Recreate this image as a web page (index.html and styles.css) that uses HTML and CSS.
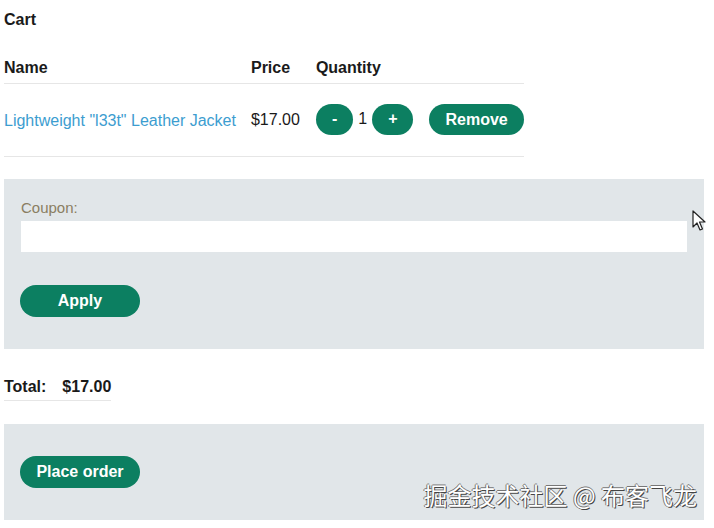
FILE: index.html
```html
<!DOCTYPE html>
<html>
<head>
    <title>Cart</title>
    <link rel="stylesheet" href="styles.css">
</head>
<body>
    <div class="page">
        <h3 class="cart-title">Cart</h3>

        <table class="cart-table">
            <thead>
                <tr>
                    <th>Name</th>
                    <th>Price</th>
                    <th>Quantity</th>
                    <th></th>
                </tr>
            </thead>
            <tbody>
                <tr>
                    <td><a class="product-link" href="#">Lightweight "l33t" Leather Jacket</a></td>
                    <td>$17.00</td>
                    <td>
                        <div class="qty">
                            <button class="btn">-</button>
                            <span>1</span>
                            <button class="btn">+</button>
                        </div>
                    </td>
                    <td><button class="btn">Remove</button></td>
                </tr>
            </tbody>
        </table>

        <div class="panel coupon-panel">
            <label class="coupon-label" for="coupon">Coupon:</label>
            <input class="coupon-input" id="coupon" type="text">
            <button class="btn btn-wide">Apply</button>
        </div>

        <table class="total-table">
            <tr>
                <th>Total:</th>
                <th>$17.00</th>
            </tr>
        </table>

        <div class="panel order-panel">
            <button class="btn btn-wide">Place order</button>
        </div>

        <!-- cursor captured in the screenshot -->
        <svg class="cursor" width="14" height="22" viewBox="0 0 14 22">
            <path d="M1 1 L1 17 L5 13 L8 20 L10.5 19 L7.5 12 L13 12 Z" fill="#fff" stroke="#222" stroke-width="1.2" stroke-linejoin="round"/>
        </svg>

        <div class="watermark">掘金技术社区 @ 布客飞龙</div>
    </div>
</body>
</html>
```

FILE: styles.css
```css
body {
    margin: 0;
    padding: 0 4px;
    font-family: "Liberation Sans", Arial, sans-serif;
    font-size: 16px;
    color: #1a1a1a;
    background-color: #fff;
}

.page {
    position: relative;
    width: 700px;
    height: 528px;
}

.cart-title {
    margin: 0;
    padding-top: 8px;
    font-size: 16px;
    line-height: 24px;
}

/* cart table */
.cart-table {
    margin-top: 24px;
    border-collapse: collapse;
}

.cart-table th {
    text-align: left;
    line-height: 24px;
    padding: 0 16px 3px 0;
    border-bottom: 1px solid #e6e6e6;
}

.cart-table td {
    height: 72px;
    padding: 0 16px 0 0;
    vertical-align: middle;
    border-bottom: 1px solid #e6e6e6;
}

.cart-table th:first-child,
.cart-table td:first-child {
    padding-right: 15px;
}

.cart-table th:last-child,
.cart-table td:last-child {
    padding-right: 0;
}

.cart-table td:last-child .btn {
    margin-top: -1px;
}

.product-link {
    color: #3c9dd0;
    text-decoration: none;
    position: relative;
    top: 1px;
}

.qty {
    display: flex;
    align-items: center;
    gap: 5px;
    margin-top: -2px;
}

.btn {
    height: 31px;
    padding: 0 16px;
    border: none;
    border-radius: 16px;
    background-color: #0c7f61;
    color: #fff;
    font-family: "Liberation Sans", Arial, sans-serif;
    font-size: 16px;
    font-weight: bold;
    cursor: pointer;
}

.btn-wide {
    min-width: 120px;
    height: 32px;
}

/* grey panels */
.panel {
    background-color: #e1e6e9;
}

.coupon-panel {
    display: flex;
    flex-direction: column;
    align-items: flex-start;
    margin-top: 22px;
    padding: 20px 16px 32px 16px;
}

.coupon-label {
    font-size: 15px;
    line-height: 18px;
    color: #8a7e62;
    padding-left: 1px;
}

.coupon-input {
    box-sizing: border-box;
    width: 100%;
    height: 33px;
    margin-top: 3px;
    margin-bottom: 32px;
    border: 1px solid #e1e6e9;
    background-color: #fff;
    outline: none;
}

/* total */
.total-table {
    margin-top: 22px;
    border-collapse: collapse;
}

.total-table th {
    text-align: left;
    line-height: 24px;
    padding: 4px 16px 1px 0;
    border-bottom: 1px solid #e6e6e6;
}

.total-table th:last-child {
    padding-right: 0;
}

.order-panel {
    margin-top: 23px;
    padding: 32px 16px;
}

.cursor {
    position: absolute;
    left: 688px;
    top: 210px;
}

.watermark {
    position: absolute;
    right: 7px;
    top: 479px;
    font-family: "Noto Sans CJK SC", sans-serif;
    font-size: 24px;
    line-height: 32px;
    color: #fff;
    text-shadow: 1px 1px 0 #444, -1px 0 0 #777, 0 -1px 0 #777;
}
```
